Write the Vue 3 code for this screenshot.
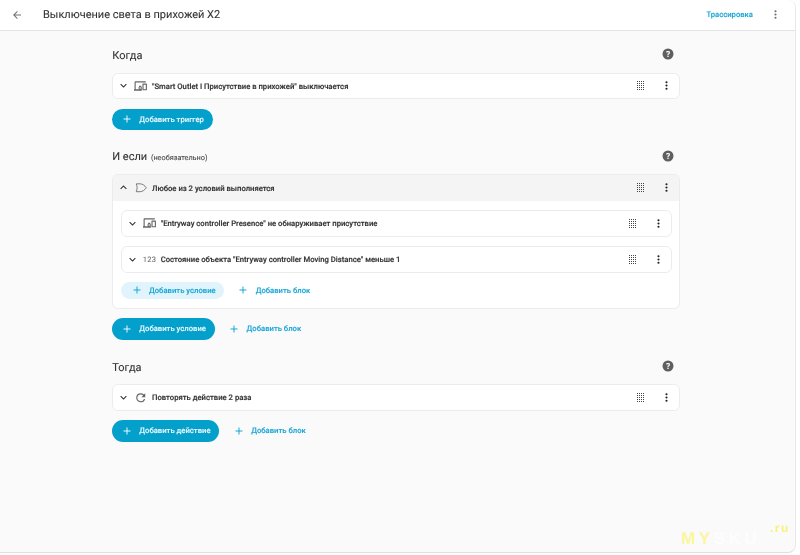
<script setup>
const plus = 'M19 13h-6v6h-2v-6H5v-2h6V5h2v6h6v2z'
const down = 'M7.410 8.580L12 13.170l4.590-4.590L18 10l-6 6-6-6z'
const up = 'M7.410 15.410L12 10.830l4.590 4.580L18 14l-6-6-6 6z'
const dots = 'M12 16a2 2 0 1 1 0 4 2 2 0 0 1 0-4m0-6a2 2 0 1 1 0 4 2 2 0 0 1 0-4m0-6a2 2 0 1 1 0 4 2 2 0 0 1 0-4z'
const device = 'M3 6h18V4H3c-1.100 0-2 .9-2 2v12H0v3h14v-3H3V6m10 6H9v1.780c-.61.550-1 1.330-1 2.220s.39 1.670 1 2.220V20h4v-1.780c.61-.55 1-1.340 1-2.220s-.39-1.670-1-2.220V12m-2 5.500c-.83 0-1.500-.67-1.500-1.500s.67-1.500 1.500-1.500 1.500.67 1.500 1.500-.67 1.500-1.500 1.500M22 8h-6c-.5 0-1 .5-1 1v10c0 .5.500 1 1 1h6c.500 0 1-.5 1-1V9c0-.5-.5-1-1-1m-1 10h-4v-8h4v8z'
const gate = 'M4 5H11C15 5 19 8 22 12C19 16 15 19 11 19H4C6 15 6 9 4 5Z'
const repeat = 'M17.650 6.350A7.960 7.960 0 0 0 12 4a8 8 0 1 0 7.730 10h-2.080A6 6 0 1 1 12 6c1.660 0 3.140.69 4.220 1.780L13 11h7V4l-2.350 2.350z'
const gridDots = [0, 2, 4, 6, 8].flatMap(y => [0, 2, 4, 6].map(x => ({ x, y })))
</script>

<template>
  <div class="frame">
    <header class="topbar">
      <svg class="back" viewBox="0 0 24 24"><path d="M20 11v2H8l5.500 5.500-1.420 1.420L4.160 12l7.920-7.920L13.500 5.500 8 11h12z" /></svg>
      <h1 class="title">Выключение света в прихожей X2</h1>
      <span class="trace">Трассировка</span>
      <svg class="top-more" viewBox="0 0 24 24"><path :d="dots" /></svg>
    </header>

    <main class="content">
      <section class="section first">
        <div class="sec-head">
          <h2>Когда</h2>
          <svg class="help" viewBox="0 0 24 24"><circle cx="12" cy="12" r="11" /><text x="12" y="18" text-anchor="middle">?</text></svg>
        </div>
        <div class="card row">
          <svg class="chev" viewBox="0 0 24 24"><path :d="down" /></svg>
          <svg class="kind" viewBox="0 0 24 24"><path :d="device" /></svg>
          <span class="label">"Smart Outlet I Присутствие в прихожей" выключается</span>
          <span class="grid"><svg viewBox="0 0 7 9"><rect v-for="d in gridDots" :key="d.x + '-' + d.y" :x="d.x" :y="d.y" width="1" height="1" /></svg></span>
          <svg class="more" viewBox="0 0 24 24"><path :d="dots" /></svg>
        </div>
        <div class="actions">
          <button class="btn primary"><svg viewBox="0 0 24 24"><path :d="plus" /></svg>Добавить триггер</button>
        </div>
      </section>

      <section class="section second">
        <div class="sec-head">
          <h2>И если <small>(необязательно)</small></h2>
          <svg class="help" viewBox="0 0 24 24"><circle cx="12" cy="12" r="11" /><text x="12" y="18" text-anchor="middle">?</text></svg>
        </div>
        <div class="card block">
          <div class="row block-head">
            <svg class="chev" viewBox="0 0 24 24"><path :d="up" /></svg>
            <svg class="kind gate" viewBox="0 0 24 24"><path :d="gate" /></svg>
            <span class="label">Любое из 2 условий выполняется</span>
            <span class="grid"><svg viewBox="0 0 7 9"><rect v-for="d in gridDots" :key="d.x + '-' + d.y" :x="d.x" :y="d.y" width="1" height="1" /></svg></span>
            <svg class="more" viewBox="0 0 24 24"><path :d="dots" /></svg>
          </div>
          <div class="block-body">
            <div class="card row inner">
              <svg class="chev" viewBox="0 0 24 24"><path :d="down" /></svg>
              <svg class="kind" viewBox="0 0 24 24"><path :d="device" /></svg>
              <span class="label">"Entryway controller Presence" не обнаруживает присутствие</span>
              <span class="grid"><svg viewBox="0 0 7 9"><rect v-for="d in gridDots" :key="d.x + '-' + d.y" :x="d.x" :y="d.y" width="1" height="1" /></svg></span>
              <svg class="more" viewBox="0 0 24 24"><path :d="dots" /></svg>
            </div>
            <div class="card row inner">
              <svg class="chev" viewBox="0 0 24 24"><path :d="down" /></svg>
              <span class="kind-text">123</span>
              <span class="label">Состояние объекта "Entryway controller Moving Distance" меньше 1</span>
              <span class="grid"><svg viewBox="0 0 7 9"><rect v-for="d in gridDots" :key="d.x + '-' + d.y" :x="d.x" :y="d.y" width="1" height="1" /></svg></span>
              <svg class="more" viewBox="0 0 24 24"><path :d="dots" /></svg>
            </div>
            <div class="actions inner-actions">
              <button class="btn tonal"><svg viewBox="0 0 24 24"><path :d="plus" /></svg>Добавить условие</button>
              <button class="btn text"><svg viewBox="0 0 24 24"><path :d="plus" /></svg>Добавить блок</button>
            </div>
          </div>
        </div>
        <div class="actions">
          <button class="btn primary"><svg viewBox="0 0 24 24"><path :d="plus" /></svg>Добавить условие</button>
          <button class="btn text"><svg viewBox="0 0 24 24"><path :d="plus" /></svg>Добавить блок</button>
        </div>
      </section>

      <section class="section third">
        <div class="sec-head">
          <h2>Тогда</h2>
          <svg class="help" viewBox="0 0 24 24"><circle cx="12" cy="12" r="11" /><text x="12" y="18" text-anchor="middle">?</text></svg>
        </div>
        <div class="card row">
          <svg class="chev" viewBox="0 0 24 24"><path :d="down" /></svg>
          <svg class="kind" viewBox="0 0 24 24"><path :d="repeat" /></svg>
          <span class="label">Повторять действие 2 раза</span>
          <span class="grid"><svg viewBox="0 0 7 9"><rect v-for="d in gridDots" :key="d.x + '-' + d.y" :x="d.x" :y="d.y" width="1" height="1" /></svg></span>
          <svg class="more" viewBox="0 0 24 24"><path :d="dots" /></svg>
        </div>
        <div class="actions">
          <button class="btn primary"><svg viewBox="0 0 24 24"><path :d="plus" /></svg>Добавить действие</button>
          <button class="btn text"><svg viewBox="0 0 24 24"><path :d="plus" /></svg>Добавить блок</button>
        </div>
      </section>
    </main>

    <div class="watermark"><span class="my">MY</span><span class="sku">SKU</span><span class="ru">.ru</span></div>
  </div>
</template>

<style scoped>
.frame {
  position: relative;
  box-sizing: border-box;
  width: 796px;
  height: 553px;
  background: #fafafa;
  border-right: 1px solid #e8e8e8;
  border-bottom: 1px solid #e0e0e0;
  border-radius: 0 8px 8px 0;
  overflow: hidden;
  font-family: Roboto, "Liberation Sans", sans-serif;
  color: #212121;
  text-rendering: geometricPrecision;
  filter: blur(0.2px);
}
.topbar {
  display: flex;
  align-items: center;
  height: 30.800px;
  box-sizing: border-box;
  background: #fff;
  border-bottom: 1px solid #e4e4e4;
}
.back { width: 12px; height: 12px; margin-left: 10.500px; fill: #707070; flex: none; }
.title { margin: 0 0 0 20.500px; font-size: 11px; font-weight: 400; flex: 1; color: #333; -webkit-text-stroke: 0.1px #333; }
.trace { font-size: 7.700px; font-weight: 500; color: #1aa6d6; margin-right: 15.500px; -webkit-text-stroke: 0.1px #1aa6d6; }
.top-more { width: 13px; height: 13px; fill: #707070; margin-right: 13.500px; flex: none; }
.content { width: 568px; margin-left: 112.300px; }
.section.first { margin-top: 15.200px; }
.section.second { margin-top: 17px; }
.section.third { margin-top: 17.800px; }
.sec-head { display: flex; align-items: center; justify-content: space-between; height: 18px; margin-bottom: 8.600px; }
h2 { margin: 1px 0 0; font-size: 11px; font-weight: 400; color: #333; -webkit-text-stroke: 0.1px #333; }
h2 small { font-size: 7.300px; color: #555; margin-left: 1px; }
.help { width: 12px; height: 12px; margin-right: 6.600px; margin-top: -1px; }
.help circle { fill: #5f5f5f; }
.help text { fill: #fff; font-size: 17px; font-weight: 700; font-family: Roboto, sans-serif; }
.card {
  box-sizing: border-box;
  background: #fff;
  border: 1px solid #ececec;
  border-radius: 6px;
}
.row { display: flex; align-items: center; height: 26.600px; }
.chev { width: 13px; height: 13px; margin-left: 3.800px; fill: #333; flex: none; }
.kind { width: 13.500px; height: 13.500px; margin-left: 4px; margin-right: 4.400px; fill: #666; flex: none; }
.kind.gate path { fill: none; stroke: #666; stroke-width: 1.500; }
.kind-text { width: 13.500px; margin-left: 4px; margin-right: 4.400px; font-size: 7.500px; text-align: center; color: #5a5a5a; flex: none; letter-spacing: .3px; }
.label { flex: 1; padding-top: 1px; font-size: 7.700px; font-weight: 500; color: #333; white-space: nowrap; -webkit-text-stroke: 0.15px #333; }
.grid { display: flex; align-items: center; justify-content: center; width: 12px; height: 12px; margin-right: 13.500px; flex: none; }
.grid svg { display: block; width: 7px; height: 9px; fill: #444; }
.more { width: 13px; height: 13px; margin-right: 6px; fill: #222; flex: none; }
.block { overflow: hidden; }
.block-head { height: 25.700px; background: #f4f4f4; }
.block-body { padding: 9px 7.700px 8.300px; }
.inner { height: 27px; margin-bottom: 9px; }
.actions { display: flex; align-items: center; gap: 5px; margin-top: 9.400px; }
.inner-actions { margin-top: 0; gap: 4.500px; }
.btn {
  display: inline-flex;
  align-items: center;
  height: 21.800px;
  padding: 0 8.600px 0 8.700px;
  border: none;
  border-radius: 11px;
  font-family: inherit;
  font-size: 7.700px;
  font-weight: 500;
  white-space: nowrap;
  text-rendering: geometricPrecision;
  -webkit-text-stroke: 0.1px currentColor;
}
.btn svg { width: 12px; height: 12px; margin-right: 6.300px; fill: currentColor; }
.primary { background: #03a0cc; color: #e9f7fb; }
.tonal { padding-left: 9.700px; padding-right: 8.500px; background: #e1f4fb; color: #1aa6d6; }
.text { background: transparent; color: #1aa6d6; }
.inner-actions .btn { height: 17.600px; }
.watermark {
  position: absolute;
  left: 681px;
  top: 529px;
  font-family: "Liberation Sans", sans-serif;
  font-weight: 700;
  font-size: 17px;
  line-height: 19px;
  letter-spacing: 3.600px;
  white-space: nowrap;
}
.my { color: #fbf59c; }
.sku { color: #fdfdfd; }
.ru { position: absolute; left: 89px; top: -10px; font-size: 12px; letter-spacing: 1.500px; color: #f9f27a; }
</style>
